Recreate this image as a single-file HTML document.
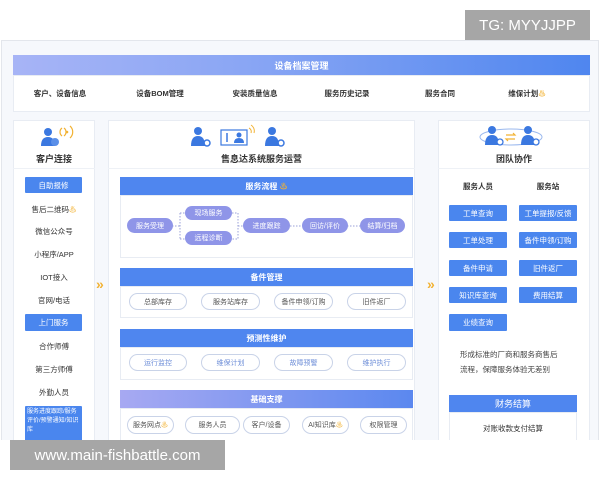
<!DOCTYPE html>
<html><head><meta charset="utf-8"><style>
*{margin:0;padding:0;box-sizing:border-box}
body{width:600px;height:480px;background:#fff;position:relative;overflow:hidden;font-family:"Liberation Sans","Noto Sans CJK SC",sans-serif;color:#333}
.a{position:absolute}
.c{display:flex;align-items:center;justify-content:center;white-space:nowrap}
.frame{left:1px;top:40px;width:598px;height:440px;background:#f6f8fc;border:1px solid #e3e6ec}
.panel{background:#fff;border:1px solid #e8ecf3}
.hdr{background:#4f86ef;color:#fff;font-size:8px;font-weight:bold}
.btn{background:#4a86ee;color:#fff;font-size:7.5px;border-radius:1px}
.pill{border:1px solid #c9d3e8;border-radius:10px;font-size:7px;color:#555;background:#fff}
.ppl{background:#8f95e8;color:#fff;border-radius:9px;font-size:7px}
.t{font-size:7.5px;color:#333}
.arr{color:#f2b233;font-size:14px;font-weight:bold}
</style></head><body>
<div class="a c" style="left:465px;top:10px;width:125px;height:30px;background:#a6a6a6;color:#fff;font-size:15px">TG: MYYJJPP</div>
<div class="a frame"></div>
<div class="a c" style="left:13px;top:55px;width:577px;height:20px;background:linear-gradient(90deg,#a7b4f6,#8aa6f4 40%,#4f86ef);color:#fff;font-size:9px;font-weight:bold">设备档案管理</div>
<div class="a panel" style="left:13px;top:75px;width:577px;height:37px"></div>
<div class="a c t" style="left:20px;top:86px;width:80px;height:14px;font-weight:bold">客户、设备信息</div>
<div class="a c t" style="left:120px;top:86px;width:80px;height:14px;font-weight:bold">设备BOM管理</div>
<div class="a c t" style="left:215px;top:86px;width:80px;height:14px;font-weight:bold">安装质量信息</div>
<div class="a c t" style="left:307px;top:86px;width:80px;height:14px;font-weight:bold">服务历史记录</div>
<div class="a c t" style="left:400px;top:86px;width:80px;height:14px;font-weight:bold">服务合同</div>
<div class="a c t" style="left:487px;top:86px;width:80px;height:14px;font-weight:bold">维保计划 <span style="color:#f2b233">♨</span></div>

<!-- left -->
<div class="a panel" style="left:13px;top:120px;width:82px;height:330px"></div>
<svg class="a" style="left:40px;top:124px" width="36" height="26"><circle cx="8" cy="8" r="4" fill="#3b78e0"/><path d="M1 22 q0-9 7-9 q7 0 7 9z" fill="#3b78e0"/><circle cx="15" cy="18" r="4" fill="#5a8fe8"/><path d="M24 4 a5 5 0 0 1 0 8 M30 2 a8 8 0 0 1 0 12 M22 4 a5 5 0 0 0 0 8" stroke="#f2b233" fill="none" stroke-width="1.2"/><circle cx="27" cy="8" r="1.3" fill="#f2b233"/></svg>
<div class="a c" style="left:13px;top:151px;width:82px;height:14px;font-size:9px;font-weight:bold">客户连接</div>
<div class="a" style="left:13px;top:168px;width:82px;height:1px;background:#eef1f6"></div>
<div class="a c btn" style="left:25px;top:177px;width:57px;height:16px">自助报修</div>
<div class="a c t" style="left:13px;top:202px;width:82px;height:14px">售后二维码<span style="color:#f2b233">♨</span></div>
<div class="a c t" style="left:13px;top:224px;width:82px;height:14px">微信公众号</div>
<div class="a c t" style="left:13px;top:247px;width:82px;height:14px">小程序/APP</div>
<div class="a c t" style="left:13px;top:270px;width:82px;height:14px">IOT接入</div>
<div class="a c t" style="left:13px;top:293px;width:82px;height:14px">官网/电话</div>
<div class="a c btn" style="left:25px;top:314px;width:57px;height:17px">上门服务</div>
<div class="a c t" style="left:13px;top:339px;width:82px;height:14px">合作师傅</div>
<div class="a c t" style="left:13px;top:362px;width:82px;height:14px">第三方师傅</div>
<div class="a c t" style="left:13px;top:385px;width:82px;height:14px">外勤人员</div>
<div class="a btn" style="left:25px;top:406px;width:57px;height:38px;font-size:6px;line-height:9px;padding:2px 2px;white-space:normal">服务进度跟踪/服务评价/预警通知/知识库</div>

<div class="a arr" style="left:96px;top:276px">»</div>
<div class="a arr" style="left:427px;top:276px">»</div>

<!-- middle -->
<div class="a panel" style="left:108px;top:120px;width:307px;height:330px"></div>
<svg class="a" style="left:190px;top:124px" width="100" height="26"><circle cx="8" cy="7" r="4" fill="#3b78e0"/><path d="M1 22 q0-10 7-10 q7 0 7 10z" fill="#3b78e0"/><circle cx="17" cy="19" r="3" fill="none" stroke="#3b78e0" stroke-width="1.5"/><rect x="31" y="6" width="26" height="15" fill="#fff" stroke="#3b78e0" stroke-width="1.2"/><circle cx="49" cy="11" r="2.5" fill="#3b78e0"/><path d="M44 19 q0-5 5-5 q5 0 5 5z" fill="#3b78e0"/><path d="M37 9v9" stroke="#3b78e0" stroke-width="1.5"/><path d="M59 4 a4 4 0 0 1 2 5 M61 1 a7 7 0 0 1 3 8" stroke="#f2b233" fill="none"/><circle cx="82" cy="7" r="4" fill="#3b78e0"/><path d="M75 22 q0-10 7-10 q7 0 7 10z" fill="#3b78e0"/><circle cx="91" cy="19" r="3" fill="none" stroke="#3b78e0" stroke-width="1.5"/></svg>
<div class="a c" style="left:108px;top:151px;width:307px;height:14px;font-size:9px;font-weight:bold">售息达系统服务运营</div>
<div class="a" style="left:108px;top:168px;width:307px;height:1px;background:#eef1f6"></div>

<div class="a c hdr" style="left:120px;top:177px;width:293px;height:18px">服务流程 <span style="color:#f2b233">&nbsp;♨</span></div>
<div class="a panel" style="left:120px;top:195px;width:293px;height:63px"></div>
<svg class="a" style="left:120px;top:195px" width="293" height="63"><path d="M52 31h8 M60 18v26 M60 18h5 M60 44h5 M112 18h6v26h-6 M118 31h5 M170 31h12 M227 31h13" stroke="#9aa0d8" stroke-dasharray="1.5 1.5" fill="none"/></svg>
<div class="a c ppl" style="left:127px;top:218px;width:46px;height:15px">服务受理</div>
<div class="a c ppl" style="left:185px;top:206px;width:47px;height:14px">现场服务</div>
<div class="a c ppl" style="left:185px;top:231px;width:47px;height:14px">远程诊断</div>
<div class="a c ppl" style="left:243px;top:218px;width:47px;height:15px">进度跟踪</div>
<div class="a c ppl" style="left:302px;top:218px;width:46px;height:15px">回访/评价</div>
<div class="a c ppl" style="left:360px;top:218px;width:45px;height:15px">结算/归档</div>

<div class="a c hdr" style="left:120px;top:268px;width:293px;height:18px">备件管理</div>
<div class="a panel" style="left:120px;top:286px;width:293px;height:32px"></div>
<div class="a c pill" style="left:129px;top:293px;width:58px;height:17px">总部库存</div>
<div class="a c pill" style="left:201px;top:293px;width:59px;height:17px">服务站库存</div>
<div class="a c pill" style="left:274px;top:293px;width:59px;height:17px">备件申领/订购</div>
<div class="a c pill" style="left:347px;top:293px;width:59px;height:17px">旧件返厂</div>

<div class="a c hdr" style="left:120px;top:329px;width:293px;height:18px">预测性维护</div>
<div class="a panel" style="left:120px;top:347px;width:293px;height:33px"></div>
<div class="a c pill" style="left:129px;top:354px;width:58px;height:17px;color:#6f8fd8">运行监控</div>
<div class="a c pill" style="left:201px;top:354px;width:59px;height:17px;color:#6f8fd8">维保计划</div>
<div class="a c pill" style="left:274px;top:354px;width:59px;height:17px;color:#6f8fd8">故障预警</div>
<div class="a c pill" style="left:347px;top:354px;width:59px;height:17px;color:#6f8fd8">维护执行</div>

<div class="a c hdr" style="left:120px;top:390px;width:293px;height:18px;background:linear-gradient(90deg,#a7a9f2,#5b88ef)">基础支撑</div>
<div class="a panel" style="left:120px;top:408px;width:293px;height:40px"></div>
<div class="a c pill" style="left:127px;top:416px;width:47px;height:18px">服务网点<span style="color:#f2b233">♨</span></div>
<div class="a c pill" style="left:185px;top:416px;width:55px;height:18px">服务人员</div>
<div class="a c pill" style="left:243px;top:416px;width:47px;height:18px">客户/设备</div>
<div class="a c pill" style="left:302px;top:416px;width:47px;height:18px">AI知识库<span style="color:#f2b233">♨</span></div>
<div class="a c pill" style="left:360px;top:416px;width:47px;height:18px">权限管理</div>

<!-- right -->
<div class="a panel" style="left:438px;top:120px;width:152px;height:330px"></div>
<svg class="a" style="left:478px;top:124px" width="66" height="26"><ellipse cx="33" cy="13" rx="31" ry="8" fill="none" stroke="#9ab8ee" stroke-width="1"/><circle cx="14" cy="6" r="4" fill="#3b78e0"/><path d="M7 21 q0-10 7-10 q7 0 7 10z" fill="#3b78e0"/><circle cx="22" cy="18" r="3" fill="#fff" stroke="#3b78e0" stroke-width="1.3"/><circle cx="50" cy="6" r="4" fill="#3b78e0"/><path d="M43 21 q0-10 7-10 q7 0 7 10z" fill="#3b78e0"/><circle cx="58" cy="18" r="3" fill="#fff" stroke="#3b78e0" stroke-width="1.3"/><path d="M28 11h9l-2-2 M37 15h-9l2 2" stroke="#f2b233" fill="none" stroke-width="1.2"/></svg>
<div class="a c" style="left:438px;top:151px;width:152px;height:14px;font-size:9px;font-weight:bold">团队协作</div>
<div class="a" style="left:438px;top:168px;width:152px;height:1px;background:#eef1f6"></div>
<div class="a c t" style="left:449px;top:179px;width:58px;height:14px;font-weight:bold">服务人员</div>
<div class="a c t" style="left:519px;top:179px;width:58px;height:14px;font-weight:bold">服务站</div>
<div class="a c btn" style="left:449px;top:205px;width:58px;height:16px">工单查询</div>
<div class="a c btn" style="left:519px;top:205px;width:58px;height:16px">工单提报/反馈</div>
<div class="a c btn" style="left:449px;top:232px;width:58px;height:16px">工单处理</div>
<div class="a c btn" style="left:519px;top:232px;width:58px;height:16px">备件申领/订购</div>
<div class="a c btn" style="left:449px;top:260px;width:58px;height:16px">备件申请</div>
<div class="a c btn" style="left:519px;top:260px;width:58px;height:16px">旧件返厂</div>
<div class="a c btn" style="left:449px;top:287px;width:58px;height:16px">知识库查询</div>
<div class="a c btn" style="left:519px;top:287px;width:58px;height:16px">费用结算</div>
<div class="a c btn" style="left:449px;top:314px;width:58px;height:17px">业绩查询</div>
<div class="a t" style="left:460px;top:347px;font-size:7.5px;line-height:15px;color:#444">形成标准的厂商和服务商售后<br>流程，保障服务体验无差别</div>
<div class="a c hdr" style="left:449px;top:395px;width:128px;height:17px;font-size:9px;font-weight:normal">财务结算</div>
<div class="a panel" style="left:449px;top:412px;width:128px;height:30px"></div>
<div class="a c t" style="left:449px;top:421px;width:128px;height:14px">对账收款支付结算</div>

<div class="a" style="left:0;top:440px;width:600px;height:40px;background:#fff"></div>
<div class="a c" style="left:10px;top:440px;width:215px;height:30px;background:#a6a6a6;color:#fff;font-size:15px">www.main-fishbattle.com</div>
</body></html>
